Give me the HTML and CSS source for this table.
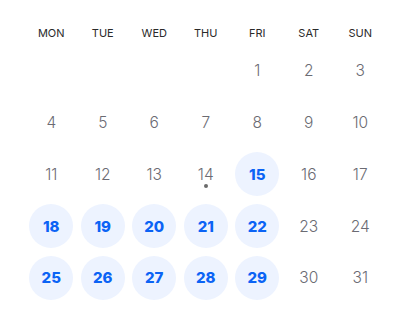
FILE: index.html
```html
<!DOCTYPE html>
<html>
<head>
<meta charset="utf-8">
<link rel="stylesheet" href="styles.css">
</head>
<body>
<div class="cal">
  <div class="head">MON</div><div class="head">TUE</div><div class="head">WED</div><div class="head">THU</div><div class="head">FRI</div><div class="head">SAT</div><div class="head">SUN</div>

  <div class="day"></div><div class="day"></div><div class="day"></div><div class="day"></div>
  <div class="day"><span class="n">1</span></div><div class="day"><span class="n">2</span></div><div class="day"><span class="n">3</span></div>

  <div class="day"><span class="n">4</span></div><div class="day"><span class="n">5</span></div><div class="day"><span class="n">6</span></div><div class="day"><span class="n">7</span></div><div class="day"><span class="n">8</span></div><div class="day"><span class="n">9</span></div><div class="day"><span class="n">10</span></div>

  <div class="day"><span class="n">11</span></div><div class="day"><span class="n">12</span></div><div class="day"><span class="n">13</span></div><div class="day"><span class="n today">14</span></div><div class="day"><span class="n sel">15</span></div><div class="day"><span class="n">16</span></div><div class="day"><span class="n">17</span></div>

  <div class="day"><span class="n sel">18</span></div><div class="day"><span class="n sel">19</span></div><div class="day"><span class="n sel">20</span></div><div class="day"><span class="n sel">21</span></div><div class="day"><span class="n sel">22</span></div><div class="day"><span class="n">23</span></div><div class="day"><span class="n">24</span></div>

  <div class="day"><span class="n sel">25</span></div><div class="day"><span class="n sel">26</span></div><div class="day"><span class="n sel">27</span></div><div class="day"><span class="n sel">28</span></div><div class="day"><span class="n sel">29</span></div><div class="day"><span class="n">30</span></div><div class="day"><span class="n">31</span></div>
</div>
</body>
</html>
```
FILE: styles.css
```css
html, body {
  margin: 0;
  padding: 0;
  background: #ffffff;
}
body {
  font-family: "Inter", "Lato", sans-serif;
}
.cal {
  display: grid;
  grid-template-columns: repeat(7, 51.5px);
  grid-template-rows: 24px repeat(5, 51.75px);
  padding: 21px 0 0 25.5px;
}
.head {
  display: flex;
  align-items: center;
  justify-content: center;
  font-size: 11px;
  font-weight: 400;
  color: #2a2a2a;
}
.day {
  display: flex;
  align-items: center;
  justify-content: center;
}
.n {
  position: relative;
  width: 44px;
  height: 44px;
  border-radius: 50%;
  display: flex;
  align-items: center;
  justify-content: center;
  font-size: 15.5px;
  font-weight: 300;
  color: #6b6b73;
}
.n.sel {
  background: #edf3ff;
  color: #0b63f5;
  font-weight: 800;
  font-size: 15px;
}
.n.today::after {
  content: "";
  position: absolute;
  left: 50%;
  top: 32px;
  width: 4px;
  height: 4px;
  margin-left: -2px;
  border-radius: 50%;
  background: #6b6b6b;
}
```
